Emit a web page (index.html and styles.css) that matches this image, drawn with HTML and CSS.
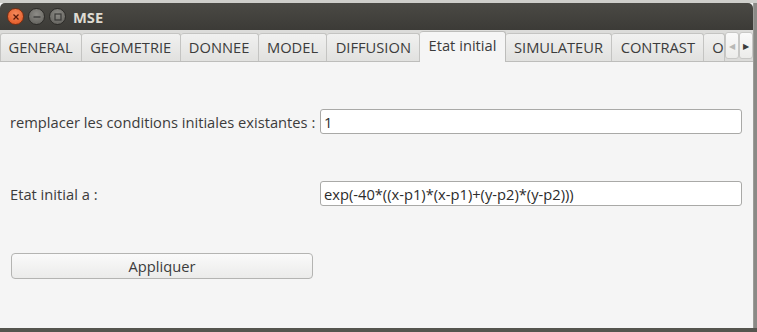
FILE: index.html
```html
<!DOCTYPE html>
<html>
<head>
  <title>MSE</title>
  <link rel="stylesheet" href="styles.css">
</head>
<body>
  <div class="desk-top"></div>
  <div class="window">
    <div class="titlebar">
      <span class="wbtn close">
        <svg width="14" height="14" viewBox="0 0 14 14"><path d="M4.5 4.5 L9.5 9.5 M9.5 4.5 L4.5 9.5" stroke="#5a1a0a" stroke-width="1.3"/></svg>
      </span>
      <span class="wbtn">
        <svg width="14" height="14" viewBox="0 0 14 14"><path d="M3.5 7 H10.5" stroke="#3a3a38" stroke-width="1.3"/></svg>
      </span>
      <span class="wbtn">
        <svg width="14" height="14" viewBox="0 0 14 14"><rect x="4" y="4" width="6" height="6" fill="none" stroke="#3a3a38" stroke-width="1.2"/></svg>
      </span>
      <span class="title">MSE</span>
    </div>

    <div class="tabbar">
      <div class="tab">GENERAL</div>
      <div class="tab">GEOMETRIE</div>
      <div class="tab">DONNEE</div>
      <div class="tab">MODEL</div>
      <div class="tab">DIFFUSION</div>
      <div class="tab active">Etat initial</div>
      <div class="tab">SIMULATEUR</div>
      <div class="tab">CONTRAST</div>
      <div class="tab cut">O</div>
      <div class="scroll">
        <span class="arrow off">&#9664;</span>
        <span class="arrow">&#9654;</span>
      </div>
    </div>

    <div class="panel">
      <div class="row first">
        <label>remplacer les conditions initiales existantes :</label>
        <input class="field" type="text" value="1">
      </div>
      <div class="row">
        <label>Etat initial a :</label>
        <input class="field" type="text" value="exp(-40*((x-p1)*(x-p1)+(y-p2)*(y-p2)))">
      </div>
      <button class="apply">Appliquer</button>
    </div>
  </div>
  <div class="desk-bottom"></div>
</body>
</html>
```

FILE: styles.css
```css
html, body {
  margin: 0;
  padding: 0;
}

body {
  width: 757px;
  height: 332px;
  overflow: hidden;
  background-color: #8a8a86;
  font-family: "Open Sans", "DejaVu Sans", sans-serif;
  font-size: 14.7px;
  color: #3c3c3c;
}

.desk-top {
  height: 3px;
  background-color: #cfcfcb;
}

.window {
  width: 753px;
  height: 325px;
  background-color: #f5f5f5;
  border-right: 1px solid #9c9c98;
  display: flex;
  flex-direction: column;
}

.titlebar {
  height: 27px;
  background: linear-gradient(#4a4944, #3c3b37);
  display: flex;
  align-items: center;
  padding-left: 7px;
  border-radius: 5px 5px 0 0;
}

.wbtn {
  width: 15px;
  height: 15px;
  border-radius: 50%;
  margin-right: 4px;
  background: radial-gradient(circle at 50% 35%, #8d8c87, #5d5c57);
  border: 1px solid #2c2b28;
  display: flex;
  align-items: center;
  justify-content: center;
}

.wbtn svg {
  display: block;
}

.wbtn.close {
  background: radial-gradient(circle at 50% 35%, #f68a5c, #e0531f);
  border-color: #7a2e12;
}

.title {
  margin-left: 3px;
  font-weight: bold;
  font-size: 14.7px;
  color: #dfdbd2;
}

.tabbar {
  height: 31px;
  display: flex;
  align-items: flex-end;
  background-color: #dcdcda;
  border-bottom: 1px solid #bdbdbb;
  position: relative;
}

.tab {
  height: 27px;
  line-height: 27px;
  padding: 0 8.3px;
  background: linear-gradient(#f1f1f0, #e1e1df);
  border: 1px solid #c4c4c2;
  border-bottom: none;
  border-left: none;
  border-radius: 3px 3px 0 0;
  color: #3c3c3c;
  white-space: nowrap;
}

.tab:first-child {
  border-left: 1px solid #c4c4c2;
  padding-left: 7.5px;
}

.tab.active {
  height: 30px;
  line-height: 27px;
  background: #f5f5f5;
  margin-bottom: -1px;
  border-color: #bdbdbb;
}

.tab.cut {
  width: 14px;
  padding: 0 0 0 8px;
  overflow: hidden;
}

.scroll {
  display: flex;
  align-self: center;
  margin-left: 0;
}

.arrow {
  width: 12px;
  height: 25px;
  border: 1px solid #c8c8c6;
  border-radius: 3px;
  background: linear-gradient(#fafafa, #ececea);
  font-size: 8px;
  line-height: 25px;
  text-align: center;
  color: #3c3c3c;
}

.arrow.off {
  color: #b8b8b6;
}

.panel {
  flex: 1;
  padding: 0 11px 0 10px;
  display: flex;
  flex-direction: column;
}

.row {
  display: flex;
  align-items: center;
  justify-content: space-between;
  margin-top: 47px;
}

.row.first {
  margin-top: 47px;
}

.row label {
  color: #3c3c3c;
}

.field {
  width: 422px;
  height: 25px;
  box-sizing: border-box;
  padding: 0 3px;
  border: 1px solid #a9a9a7;
  border-radius: 3px;
  background-color: #ffffff;
  font-family: inherit;
  font-size: 14.7px;
  color: #2c2c2c;
}

.apply {
  margin-top: 47px;
  margin-left: 1px;
  width: 302px;
  height: 26px;
  border: 1px solid #b4b4b2;
  border-radius: 4px;
  background: linear-gradient(#fafafa, #ebebea);
  font-family: inherit;
  font-size: 14.7px;
  color: #3c3c3c;
}

.desk-bottom {
  height: 4px;
  background-color: #55554f;
}
```
